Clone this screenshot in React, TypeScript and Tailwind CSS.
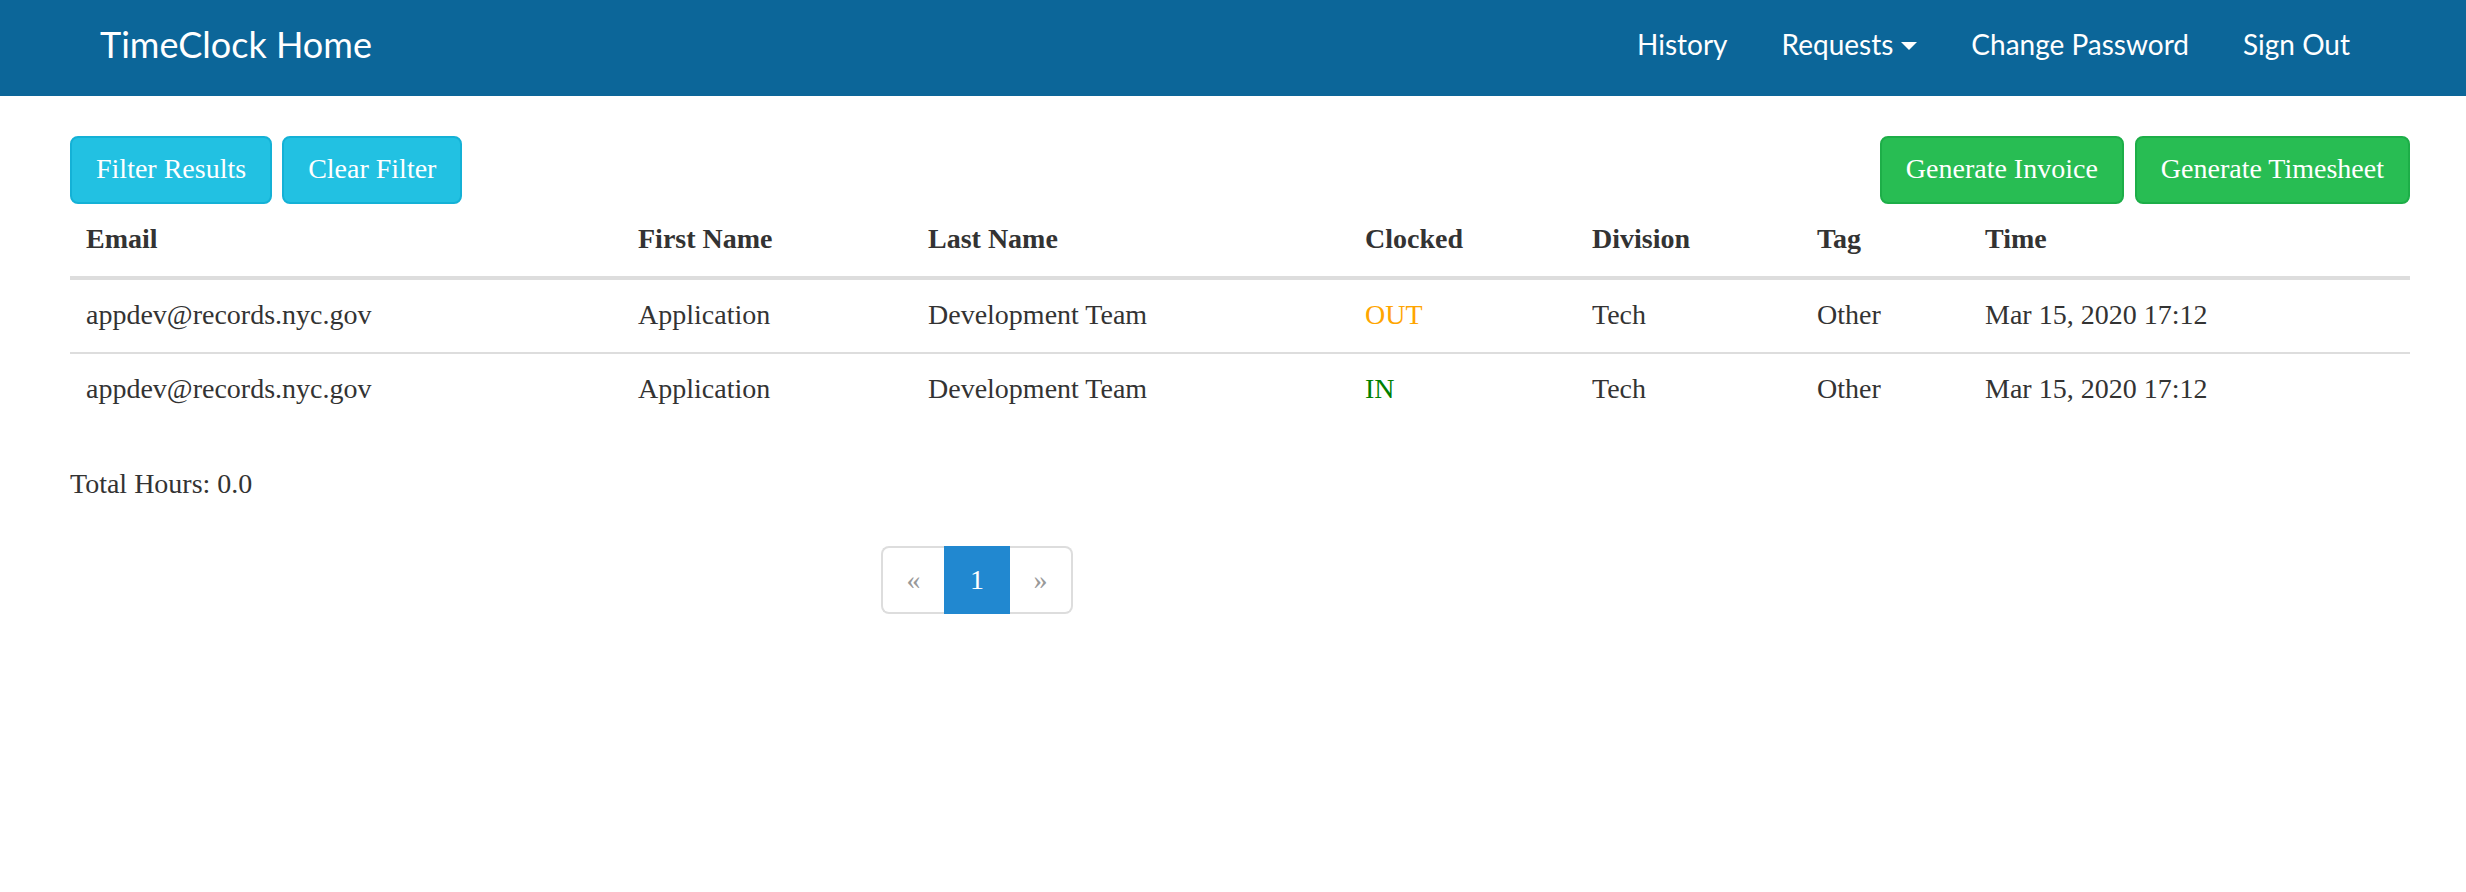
const rows = [
  { email: "appdev@records.nyc.gov", first: "Application", last: "Development Team", clocked: "OUT", division: "Tech", tag: "Other", time: "Mar 15, 2020 17:12" },
  { email: "appdev@records.nyc.gov", first: "Application", last: "Development Team", clocked: "IN", division: "Tech", tag: "Other", time: "Mar 15, 2020 17:12" },
];

const headers = ["Email", "First Name", "Last Name", "Clocked", "Division", "Tag", "Time"];

export default function App() {
  return (
    <div className="min-h-[892px] w-full bg-white text-[#333] font-['Liberation_Serif',serif] text-[28px] leading-[40px]">
      {/* NAVBAR */}
      <nav className="flex h-[96px] items-center justify-between bg-[#0c6699] pl-[100px] pr-[116px] pb-[9px] font-['Lato',sans-serif] text-white">
        <span className="text-[36px] leading-[40px]">TimeClock Home</span>
        <ul className="flex items-center gap-[54px] text-[28px] leading-[40px]">
          <li>History</li>
          <li className="flex items-center gap-[8px]">
            Requests
            <span className="mt-[4px] h-0 w-0 border-x-[8px] border-t-[8px] border-x-transparent border-t-white" />
          </li>
          <li>Change Password</li>
          <li>Sign Out</li>
        </ul>
      </nav>

      <main className="pl-[70px] pr-[56px] pt-[40px]">
        {/* ACTIONS */}
        <div className="flex items-center justify-between">
          <div className="flex gap-[10px]">
            <button className="h-[68px] rounded-[8px] border-2 border-[#14b1d6] bg-[#22c1e2] px-[24px] pb-[2px] text-white">Filter Results</button>
            <button className="h-[68px] rounded-[8px] border-2 border-[#14b1d6] bg-[#22c1e2] px-[24px] pb-[2px] text-white">Clear Filter</button>
          </div>
          <div className="flex gap-[11px]">
            <button className="h-[68px] rounded-[8px] border-2 border-[#1dae48] bg-[#28bd53] px-[24px] pb-[2px] text-white">Generate Invoice</button>
            <button className="h-[68px] rounded-[8px] border-2 border-[#1dae48] bg-[#28bd53] px-[24px] pb-[2px] text-white">Generate Timesheet</button>
          </div>
        </div>

        {/* TABLE */}
        <table className="w-full table-fixed border-collapse text-left">
          <colgroup>
            <col className="w-[552px]" />
            <col className="w-[290px]" />
            <col className="w-[437px]" />
            <col className="w-[227px]" />
            <col className="w-[225px]" />
            <col className="w-[168px]" />
            <col />
          </colgroup>
          <thead>
            <tr className="border-b-4 border-[#ddd]">
              {headers.map((h) => (
                <th key={h} className="px-[16px] pt-[15px] pb-[17px] font-bold">{h}</th>
              ))}
            </tr>
          </thead>
          <tbody>
            {rows.map((r, i) => (
              <tr key={i} className={i > 0 ? "border-t-2 border-[#ddd]" : ""}>
                <td className="px-[16px] pt-[15px] pb-[17px]">{r.email}</td>
                <td className="px-[16px] pt-[15px] pb-[17px]">{r.first}</td>
                <td className="px-[16px] pt-[15px] pb-[17px]">{r.last}</td>
                <td className={`px-[16px] pt-[15px] pb-[17px] ${r.clocked === "OUT" ? "text-[#ffa500]" : "text-[#008000]"}`}>{r.clocked}</td>
                <td className="px-[16px] pt-[15px] pb-[17px]">{r.division}</td>
                <td className="px-[16px] pt-[15px] pb-[17px]">{r.tag}</td>
                <td className="px-[16px] pt-[15px] pb-[17px]">{r.time}</td>
              </tr>
            ))}
          </tbody>
        </table>

        <p className="mt-[38px]">Total Hours: 0.0</p>

        {/* PAGINATION */}
        <div className="ml-[811px] mt-[42px] flex w-max">
          <span className="flex h-[68px] w-[63px] items-center justify-center rounded-l-[8px] border-2 border-r-0 border-[#ddd] text-[#999]">«</span>
          <span className="flex h-[68px] w-[66px] items-center justify-center bg-[#2188d0] text-white">1</span>
          <span className="flex h-[68px] w-[63px] items-center justify-center rounded-r-[8px] border-2 border-l-0 border-[#ddd] text-[#999]">»</span>
        </div>
      </main>
    </div>
  );
}
